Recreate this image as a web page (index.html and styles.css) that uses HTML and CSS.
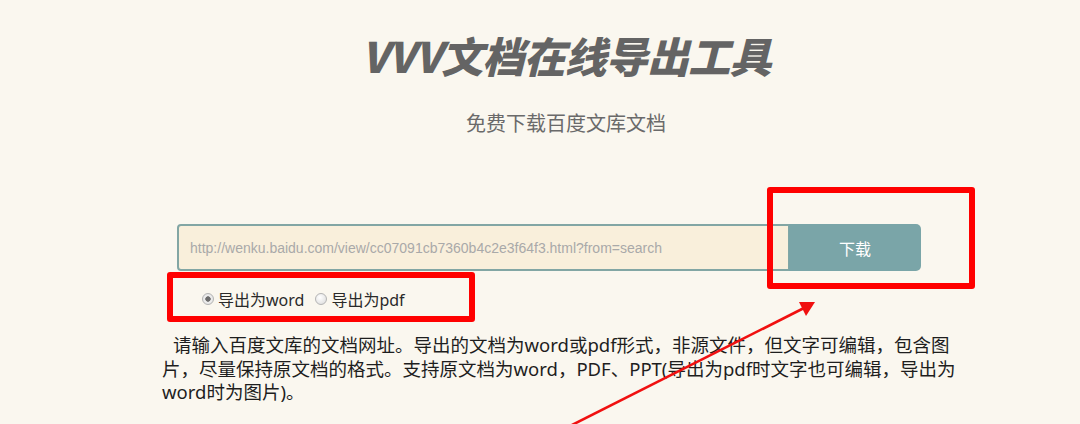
FILE: index.html
```html
<!DOCTYPE html>
<html lang="zh-CN">
<head>
<meta charset="utf-8">
<title>VVV文档在线导出工具</title>
<link rel="stylesheet" href="styles.css">
</head>
<body>
<div class="page">
  <header class="header">
    <h1 class="title">VVV文档在线导出工具</h1>
    <p class="subtitle">免费下载百度文库文档</p>
  </header>
  <main class="main">
    <form class="search">
      <input class="url" type="text" placeholder="http://wenku.baidu.com/view/cc07091cb7360b4c2e3f64f3.html?from=search">
      <button class="btn" type="button">下载</button>
    </form>
    <div class="options">
      <label class="opt"><input class="radio" type="radio" name="fmt" checked><span>导出为word</span></label>
      <label class="opt"><input class="radio" type="radio" name="fmt"><span>导出为pdf</span></label>
    </div>
    <p class="desc">请输入百度文库的文档网址。导出的文档为word或pdf形式，非源文件，但文字可编辑，包含图片，尽量保持原文档的格式。支持原文档为word，PDF、PPT(导出为pdf时文字也可编辑，导出为word时为图片)。</p>
  </main>
  <div class="mark mark-btn"></div>
  <div class="mark mark-opt"></div>
  <svg class="arrow" width="1080" height="424" viewBox="0 0 1080 424">
    <line x1="566" y1="428" x2="804" y2="308" stroke="#f01010" stroke-width="2.6"/>
    <polygon points="815,302 799,302 806,316" fill="#f01010"/>
  </svg>
</div>
</body>
</html>
```
FILE: styles.css
```css
html, body {
  margin: 0;
  padding: 0;
  background: #faf7ef;
}
.page {
  position: relative;
  width: 1080px;
  height: 424px;
  overflow: hidden;
  font-family: "Noto Sans", "Noto Sans CJK SC", sans-serif;
}
.header {
  padding-left: 52px;
  padding-top: 30px;
  text-align: center;
  color: #666;
}
.title {
  margin: 0;
  font-family: "Noto Sans CJK SC", sans-serif;
  font-size: 42px;
  line-height: 50px;
  font-weight: 900;
  font-style: italic;
  letter-spacing: -0.8px;
  color: #646464;
}
.subtitle {
  margin: 31px 0 0 0;
  font-family: "Noto Sans CJK SC", sans-serif;
  font-size: 20px;
  line-height: 24px;
  color: #6a6a6a;
}
.main {
  margin-left: 162px;
  width: 800px;
}
.search {
  display: flex;
  margin: 89px 0 0 15px;
  width: 744px;
  height: 47px;
}
.url {
  box-sizing: border-box;
  flex: 0 0 612px;
  height: 47px;
  margin: 0;
  padding: 0 0 0 11px;
  border: 2px solid #82a6a4;
  border-right: 1px solid #82a6a4;
  border-radius: 4px 0 0 4px;
  background: #f9efdb;
  font-family: "Liberation Sans", Arial, sans-serif;
  font-size: 14px;
  outline: none;
}
.url::placeholder {
  color: #a9a9a9;
}
.btn {
  flex: 1;
  margin: 0;
  border: none;
  border-radius: 0 5px 5px 0;
  background: #7aa5a8;
  color: #fff;
  font-family: "Noto Sans CJK SC", sans-serif;
  font-size: 16px;
  padding: 0;
}
.options {
  display: flex;
  align-items: center;
  gap: 11px;
  margin: 16px 0 0 40px;
  height: 24px;
}
.opt {
  display: flex;
  align-items: center;
  gap: 4px;
  font-size: 16px;
  color: #2a2a2a;
}
.radio {
  appearance: none;
  -webkit-appearance: none;
  box-sizing: border-box;
  width: 12px;
  height: 12px;
  margin: 0;
  border: 1px solid #b4b4b4;
  border-radius: 50%;
  background: radial-gradient(circle at 40% 35%, #ffffff 0%, #e4e4e4 70%, #d2d2d2 100%);
}
.radio:checked {
  background: radial-gradient(circle, #6c6c6c 0, #6c6c6c 2.4px, #efefef 3px, #dedede 100%);
}
.desc {
  margin: 22px 0 0 0;
  width: 795px;
  font-size: 18.5px;
  line-height: 23.5px;
  text-indent: 11px;
  color: #1e1e1e;
}
.mark {
  position: absolute;
  box-sizing: border-box;
  border: 6px solid #ff0000;
  border-radius: 3px;
}
.mark-btn {
  left: 767px;
  top: 187px;
  width: 208px;
  height: 102px;
}
.mark-opt {
  left: 167px;
  top: 272px;
  width: 308px;
  height: 50px;
}
.arrow {
  position: absolute;
  left: 0;
  top: 0;
  pointer-events: none;
}
```
